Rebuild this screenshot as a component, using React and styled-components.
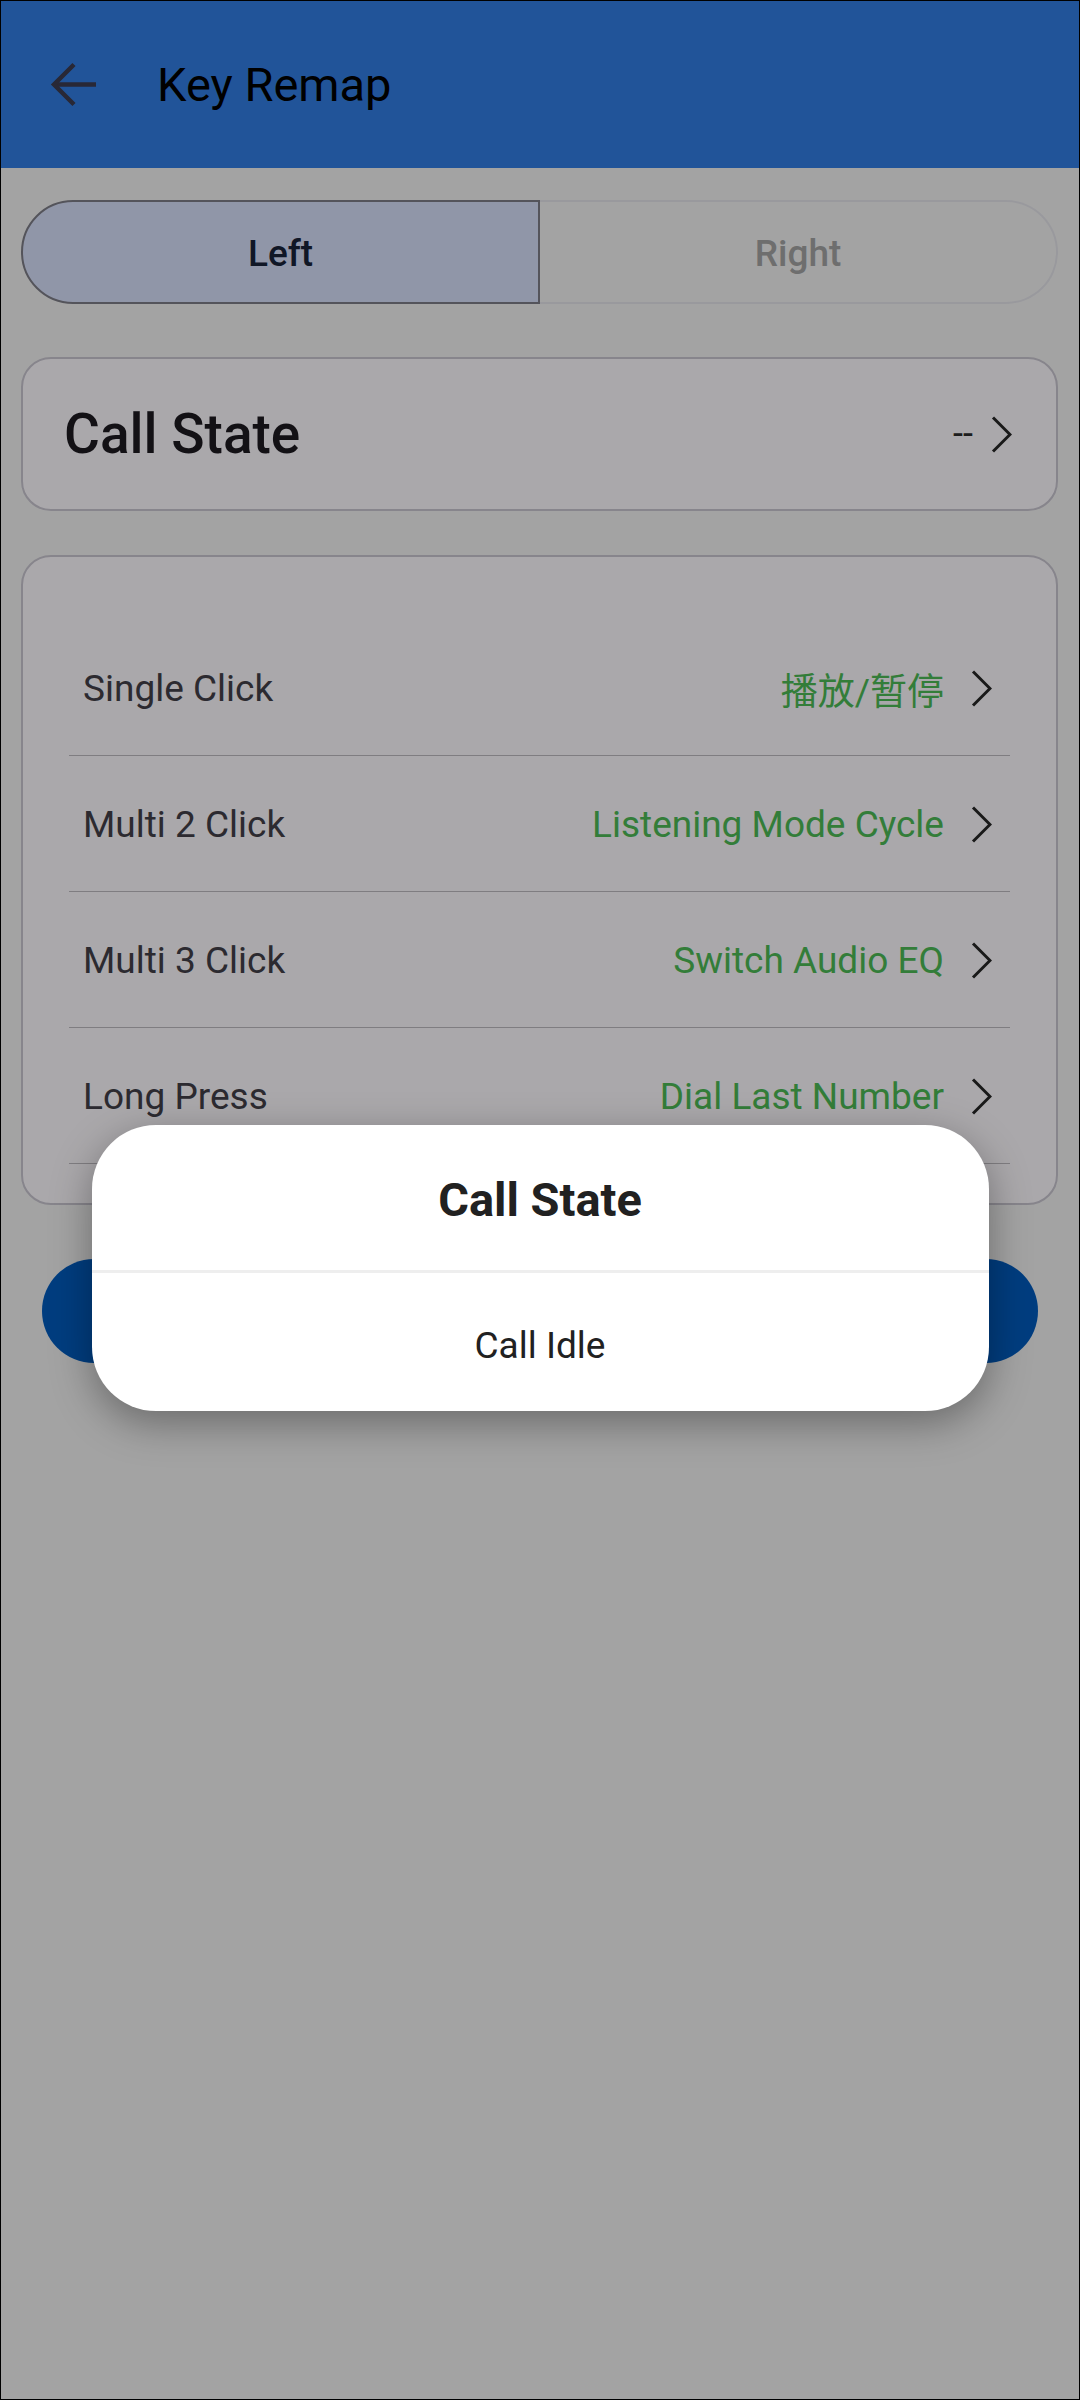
import styled, { createGlobalStyle } from 'styled-components';

const GlobalStyle = createGlobalStyle`
  html, body {
    margin: 0;
    padding: 0;
    background: #000;
  }
  body {
    font-family: Roboto, "Noto Sans", "Noto Sans CJK SC", sans-serif;
  }
  * {
    box-sizing: border-box;
  }
`;

const Screen = styled.div`
  position: relative;
  width: 1080px;
  height: 2400px;
  border: 1px solid #000;
  background: #f1f1f1;
  overflow: hidden;
`;

const Header = styled.header`
  display: flex;
  align-items: center;
  height: 167px;
  background: #327de2;
`;

const BackButton = styled.button`
  display: flex;
  width: 63px;
  height: 63px;
  margin-left: 41px;
  padding: 0;
  border: none;
  background: none;
  color: #3b3b50;
`;

const Title = styled.h1`
  margin: 0 0 0 52px;
  font-size: 47px;
  font-weight: 400;
  color: #000;
`;

const Content = styled.main`
  display: flex;
  flex-direction: column;
  padding: 0 21px 0 20px;
`;

const Tabs = styled.div`
  display: grid;
  grid-template-columns: 519px 1fr;
  height: 104px;
  margin-top: 32px;
`;

const Tab = styled.div`
  display: flex;
  align-items: center;
  justify-content: center;
  padding-top: 2px;
  font-size: 37px;
  font-weight: 500;
  color: ${(p) => (p.$active ? '#192339' : '#a3a3a3')};
  background: ${(p) => (p.$active ? '#d5ddf8' : 'transparent')};
  border: 2px solid ${(p) => (p.$active ? '#7c7c86' : '#e2e2e8')};
  border-left: ${(p) => (p.$active ? '' : 'none')};
  border-radius: ${(p) => (p.$active ? '52px 0 0 52px' : '0 52px 52px 0')};
`;

const Card = styled.section`
  background: #fbf8fd;
  border: 2px solid #c7c4ce;
  border-radius: 30px;
`;

const StateCard = styled(Card)`
  display: flex;
  align-items: center;
  justify-content: space-between;
  height: 154px;
  margin-top: 53px;
  padding: 0 44px 0 41px;
`;

const StateLabel = styled.span`
  font-size: 55px;
  font-weight: 500;
  color: #1d1a20;
`;

const StateValue = styled.span`
  display: flex;
  align-items: center;
  gap: 18px;
  font-size: 36px;
  color: #2c2c2c;
`;

const KeyList = styled(Card)`
  margin-top: 44px;
  padding: 63px 46px 39px;
`;

const KeyRow = styled.div`
  display: flex;
  align-items: center;
  justify-content: space-between;
  height: 136px;
  padding: 2px 18px 0 14px;
  border-bottom: 1px solid #bcb9bf;
`;

const KeyName = styled.span`
  font-size: 37px;
  color: #423f48;
`;

const KeyAction = styled.span`
  display: flex;
  align-items: center;
  gap: 27px;
  font-size: 37px;
  color: #4cb955;
  font-family: Roboto, "Noto Sans CJK SC", sans-serif;
`;

const ApplyButton = styled.button`
  height: 104px;
  margin: 54px 20px 0 21px;
  border: none;
  border-radius: 52px;
  background: #005abc;
`;

const Backdrop = styled.div`
  position: absolute;
  inset: 0;
  display: flex;
  justify-content: center;
  align-items: flex-start;
  padding-top: 1124px;
  background: rgba(0, 0, 0, 0.32);
`;

const Dialog = styled.div`
  display: flex;
  flex-direction: column;
  width: 897px;
  background: #fff;
  border-radius: 64px;
  overflow: hidden;
  box-shadow: 0 12px 40px rgba(0, 0, 0, 0.35);
`;

const DialogTitle = styled.div`
  display: flex;
  align-items: center;
  justify-content: center;
  height: 148px;
  padding-top: 4px;
  font-size: 47px;
  font-weight: 700;
  color: #212121;
  border-bottom: 3px solid #eeeeee;
`;

const DialogOption = styled.div`
  display: flex;
  align-items: center;
  justify-content: center;
  height: 138px;
  padding-top: 6px;
  font-size: 37px;
  color: #212121;
`;

function Chevron() {
  return (
    <svg width="21" height="37" viewBox="0 0 21 37">
      <polyline
        points="2,1.5 19,18.5 2,35.5"
        fill="none"
        stroke="#262626"
        strokeWidth="3"
      />
    </svg>
  );
}

const keys = [
  { name: 'Single Click', action: '播放/暂停' },
  { name: 'Multi 2 Click', action: 'Listening Mode Cycle' },
  { name: 'Multi 3 Click', action: 'Switch Audio EQ' },
  { name: 'Long Press', action: 'Dial Last Number' },
];

export default function App() {
  return (
    <>
      <GlobalStyle />
      <Screen>
        <Header>
          <BackButton aria-label="Back">
            <svg width="63" height="63" viewBox="0 0 63 63" fill="none" stroke="currentColor" strokeWidth="4.5">
              <path d="M54 31.5H13" />
              <path d="M32 11.5 12 31.5l20 20" />
            </svg>
          </BackButton>
          <Title>Key Remap</Title>
        </Header>
        <Content>
          <Tabs>
            <Tab $active>Left</Tab>
            <Tab>Right</Tab>
          </Tabs>
          <StateCard>
            <StateLabel>Call State</StateLabel>
            <StateValue>
              --
              <Chevron />
            </StateValue>
          </StateCard>
          <KeyList>
            {keys.map((k) => (
              <KeyRow key={k.name}>
                <KeyName>{k.name}</KeyName>
                <KeyAction>
                  {k.action}
                  <Chevron />
                </KeyAction>
              </KeyRow>
            ))}
          </KeyList>
          <ApplyButton aria-label="Apply" />
        </Content>
        <Backdrop>
          <Dialog>
            <DialogTitle>Call State</DialogTitle>
            <DialogOption>Call Idle</DialogOption>
          </Dialog>
        </Backdrop>
      </Screen>
    </>
  );
}
